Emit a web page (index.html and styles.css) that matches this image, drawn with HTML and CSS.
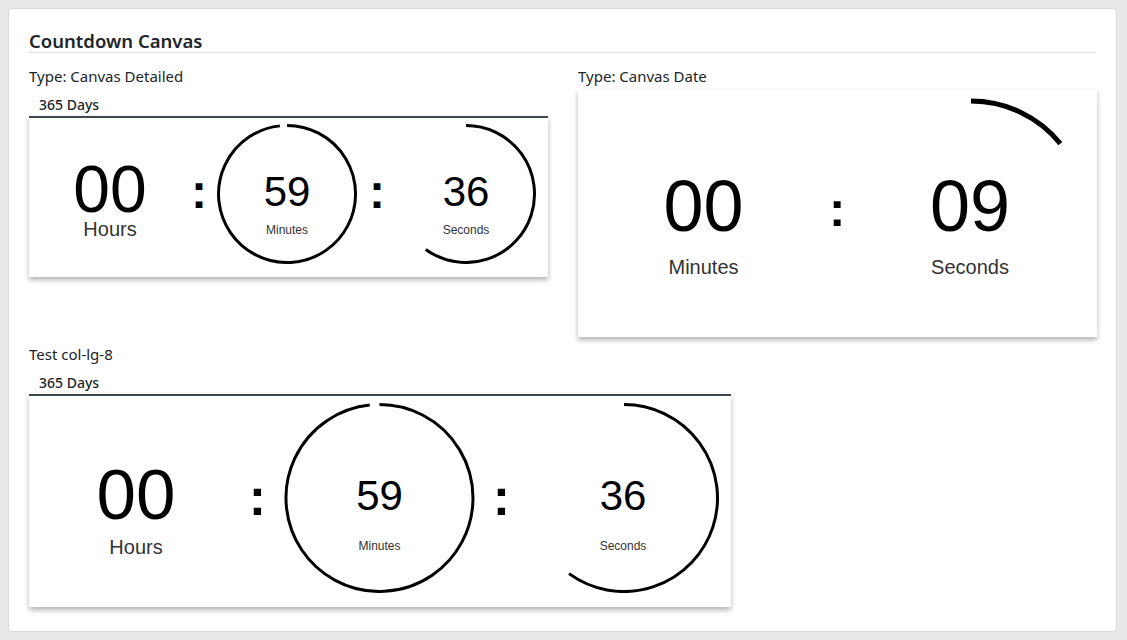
FILE: index.html
```html
<!DOCTYPE html>
<html lang="en">
<head>
<meta charset="utf-8">
<title>Countdown Canvas</title>
<link rel="stylesheet" href="styles.css">
</head>
<body>
<div class="card">
  <h5 class="card-title">Countdown Canvas</h5>
  <div class="row row-top">
    <div class="col col-6">
      <div class="type-label">Type: Canvas Detailed</div>
      <div class="days">365 Days</div>
      <div class="cd cd-bordered cd-sm">
        <div class="unit unit-big"><span class="num">00</span><span class="lbl">Hours</span></div>
        <div class="sep">:</div>
        <div class="unit unit-ring">
          <svg class="ring" width="160" height="140" viewBox="0 0 160 140"><path d="M80 1.5 A68.5 68.5 0 1 1 72.84 1.88"/></svg>
          <span class="num">59</span><span class="lbl">Minutes</span>
        </div>
        <div class="sep">:</div>
        <div class="unit unit-ring">
          <svg class="ring" width="158" height="140" viewBox="0 0 158 140"><path d="M79 1.5 A68.5 68.5 0 1 1 38.74 125.42"/></svg>
          <span class="num">36</span><span class="lbl">Seconds</span>
        </div>
      </div>
    </div>
    <div class="col col-6">
      <div class="type-label">Type: Canvas Date</div>
      <div class="cd cd-date">
        <div class="unit"><span class="num">00</span><span class="lbl">Minutes</span></div>
        <div class="sep">:</div>
        <div class="unit">
          <svg class="ring ring-thick" width="254" height="248" viewBox="0 0 254 248"><path d="M128 12 A115 115 0 0 1 217.37 54.63"/></svg>
          <span class="num">09</span><span class="lbl">Seconds</span>
        </div>
      </div>
    </div>
  </div>
  <div class="row">
    <div class="col col-8">
      <div class="type-label">Test col-lg-8</div>
      <div class="days">365 Days</div>
      <div class="cd cd-bordered cd-lg">
        <div class="unit unit-big"><span class="num">00</span><span class="lbl">Hours</span></div>
        <div class="sep">:</div>
        <div class="unit unit-ring">
          <svg class="ring" width="215" height="190" viewBox="0 0 215 190"><path d="M107.5 1.5 A93.5 93.5 0 1 1 97.73 2.01"/></svg>
          <span class="num">59</span><span class="lbl">Minutes</span>
        </div>
        <div class="sep">:</div>
        <div class="unit unit-ring">
          <svg class="ring" width="214" height="190" viewBox="0 0 214 190"><path d="M108 1.5 A93.5 93.5 0 1 1 53.04 170.64"/></svg>
          <span class="num">36</span><span class="lbl">Seconds</span>
        </div>
      </div>
    </div>
  </div>
</div>
</body>
</html>
```
FILE: styles.css
```css
* { box-sizing: border-box; }

html, body { margin: 0; }

body {
  padding: 8px 10px 8px 8px;
  background: #e9e9e9;
  font-family: "Noto Sans", "Open Sans", sans-serif;
  font-size: 14px;
  line-height: 21px;
  color: #212529;
}

.card {
  background: #fff;
  border: 1px solid #d9d9d9;
  border-radius: 4px;
  padding: 21px 20px 24px 20px;
}

.card-title {
  margin: 0 0 13px;
  font-size: 18.5px;
  line-height: 22px;
  font-weight: 600;
  color: #212529;
  border-bottom: 1px solid #dee2e6;
}

.row {
  display: flex;
  gap: 30px;
}

.row-top {
  margin-bottom: 7px;
}

.col-6 { flex: 0 0 519px; }
.col-8 { flex: 0 0 702px; }

.type-label {
  font-size: 15px;
  margin-bottom: 2px;
}

.days {
  padding: 6px 10px 1px;
  font-weight: 500;
  line-height: 20px;
}

/* countdown panels */
.cd {
  display: grid;
  background: #fff;
  box-shadow: 0 3px 5px rgba(0, 0, 0, 0.3);
  font-family: "Liberation Sans", Arial, sans-serif;
  color: #000;
}

.cd-bordered {
  border-top: 2px solid #3f474f;
}

.unit {
  position: relative;
  display: flex;
  flex-direction: column;
  align-items: center;
}

.num, .lbl {
  display: block;
  position: relative;
  white-space: nowrap;
}

.lbl { color: #333; }

.ring {
  position: absolute;
  left: 0;
  top: 0;
}

.ring path {
  fill: none;
  stroke: #000;
  stroke-width: 3;
}

.ring-thick path { stroke-width: 5; }

.sep {
  text-align: center;
  font-weight: 700;
}

/* small detailed */
.cd-sm {
  grid-template-columns: 162px 16px 160px 20px 158px;
  grid-template-rows: 140px;
  padding: 6px 0 13px;
}
.cd-sm .unit-big { padding-top: 37px; }
.cd-sm .unit-big .num { font-size: 66px; line-height: 56px; }
.cd-sm .unit-big .lbl { font-size: 20px; line-height: 20px; margin-top: 2px; }
.cd-sm .unit-ring { padding-top: 47px; }
.cd-sm .unit-ring .num { font-size: 42px; line-height: 42px; }
.cd-sm .unit-ring .lbl { font-size: 12px; line-height: 12px; margin-top: 11px; }
.cd-sm .sep { padding-top: 44px; font-size: 48px; line-height: 48px; }

/* large detailed */
.cd-lg {
  grid-template-columns: 214px 29px 215px 29px 214px;
  grid-template-rows: 190px;
  padding: 7px 0 14px;
}
.cd-lg .unit-big { padding-top: 56px; }
.cd-lg .unit-big .num { font-size: 71px; line-height: 71px; }
.cd-lg .unit-big .lbl { font-size: 20px; line-height: 20px; margin-top: 7px; }
.cd-lg .unit-ring { padding-top: 72px; }
.cd-lg .unit-ring .num { font-size: 42px; line-height: 42px; }
.cd-lg .unit-ring .lbl { font-size: 12px; line-height: 12px; margin-top: 23px; }
.cd-lg .sep { padding-top: 68px; font-size: 52px; line-height: 52px; }

/* date */
.cd-date {
  grid-template-columns: 251px 14px 254px;
  grid-template-rows: 248px;
}
.cd-date .unit { padding-top: 81px; }
.cd-date .num { font-size: 72px; line-height: 72px; }
.cd-date .lbl { font-size: 20px; line-height: 20px; margin-top: 15px; }
.cd-date .sep { padding-top: 96px; font-size: 49px; line-height: 49px; }
```
